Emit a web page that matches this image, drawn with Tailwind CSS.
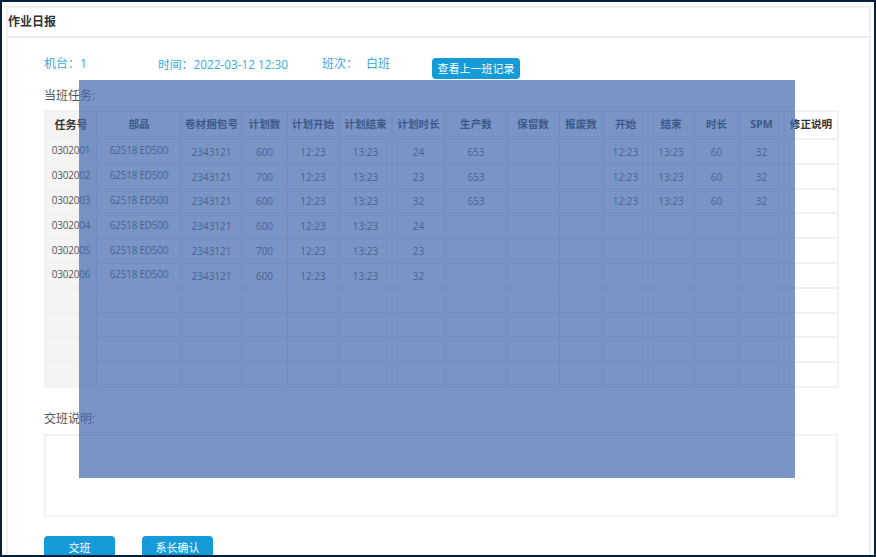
<!DOCTYPE html>
<html lang="zh-CN">
  <head>
    <meta charset="UTF-8" />
    <title>作业日报</title>
    <script src="https://cdn.jsdelivr.net/npm/@tailwindcss/browser@4"></script>
  </head>
  <body class="bg-white">
    <div class="relative w-[876px] h-[557px] overflow-hidden bg-white border-2 border-[#03213a] font-['Open_Sans','Noto_Sans_CJK_SC',sans-serif] text-[#555]">
      <div class="h-[555px] ml-[4px] mt-[4px] mr-[3px] border-l-2 border-r-2 border-t-2 border-[#f0f0f0]">
        <!-- HEADER -->
        <div class="h-[30px] border-b-2 border-[#ebebeb] pt-[5px] text-[12px] leading-[18px] font-bold text-[#333]">作业日报</div>

        <div class="pl-[36px]">
          <!-- INFO ROW -->
          <div class="flex h-[39px] pt-[16px] text-[12px] leading-[20px] text-[#36a9e0]">
            <span class="w-[114px]">机台：1</span>
            <span class="w-[164px] text-[11.8px]">时间：2022-03-12 12:30</span>
            <span class="w-[44px]">班次：</span>
            <span class="w-[66px]">白班</span>
            <button class="h-[21px] w-[88px] mt-[4px] rounded-[4px] bg-[#159bd7] text-white text-[11px] leading-[21px]">查看上一班记录</button>
          </div>

          <p class="mt-[9px] h-[20px] text-[12px] leading-[20px]">当班任务:</p>

          <!-- TASK TABLE -->
          <table class="mt-[4px] w-[793px] table-fixed border-collapse text-[10px] text-center">
            <colgroup>
              <col class="w-[52px]" /><col class="w-[84px]" /><col class="w-[61px]" /><col class="w-[45px]" /><col class="w-[52px]" /><col class="w-[53px]" /><col class="w-[53px]" /><col class="w-[62px]" /><col class="w-[52px]" /><col class="w-[44px]" /><col class="w-[45px]" /><col class="w-[46px]" /><col class="w-[45px]" /><col class="w-[45px]" /><col class="w-[54px]" />
            </colgroup>
            <thead>
              <tr class="h-[28px] text-[10.6px] font-bold text-[#333] [&>th]:border-2 [&>th]:border-[#f1f1f1] [&>th]:p-0 [&>th]:whitespace-nowrap">
                <th class="bg-[#f4f4f4] text-[11px]">任务号</th><th>部品</th><th>卷材捆包号</th><th>计划数</th><th>计划开始</th><th>计划结束</th><th>计划时长</th><th>生产数</th><th>保留数</th><th>报废数</th><th>开始</th><th>结束</th><th>时长</th><th>SPM</th><th>修正说明</th>
              </tr>
            </thead>
            <tbody class="[&_td]:border-2 [&_td]:border-[#f1f1f1] [&_td]:p-0 [&_td]:pt-[2px] [&_tr]:h-[24.8px] [&_td:first-child]:bg-[#f4f4f4] [&_td:nth-child(-n+2)]:pt-0 [&_td:nth-child(-n+2)]:pb-[1px] [&_td:nth-child(-n+2)]:tracking-[-0.25px]">
              <tr><td>0302001</td><td>62518 ED500</td><td>2343121</td><td>600</td><td>12:23</td><td>13:23</td><td>24</td><td>653</td><td></td><td></td><td>12:23</td><td>13:23</td><td>60</td><td>32</td><td></td></tr>
              <tr><td>0302002</td><td>62518 ED500</td><td>2343121</td><td>700</td><td>12:23</td><td>13:23</td><td>23</td><td>653</td><td></td><td></td><td>12:23</td><td>13:23</td><td>60</td><td>32</td><td></td></tr>
              <tr><td>0302003</td><td>62518 ED500</td><td>2343121</td><td>600</td><td>12:23</td><td>13:23</td><td>32</td><td>653</td><td></td><td></td><td>12:23</td><td>13:23</td><td>60</td><td>32</td><td></td></tr>
              <tr><td>0302004</td><td>62518 ED500</td><td>2343121</td><td>600</td><td>12:23</td><td>13:23</td><td>24</td><td></td><td></td><td></td><td></td><td></td><td></td><td></td><td></td></tr>
              <tr><td>0302005</td><td>62518 ED500</td><td>2343121</td><td>700</td><td>12:23</td><td>13:23</td><td>23</td><td></td><td></td><td></td><td></td><td></td><td></td><td></td><td></td></tr>
              <tr><td>0302006</td><td>62518 ED500</td><td>2343121</td><td>600</td><td>12:23</td><td>13:23</td><td>32</td><td></td><td></td><td></td><td></td><td></td><td></td><td></td><td></td></tr>
              <tr><td></td><td></td><td></td><td></td><td></td><td></td><td></td><td></td><td></td><td></td><td></td><td></td><td></td><td></td><td></td></tr>
              <tr><td></td><td></td><td></td><td></td><td></td><td></td><td></td><td></td><td></td><td></td><td></td><td></td><td></td><td></td><td></td></tr>
              <tr><td></td><td></td><td></td><td></td><td></td><td></td><td></td><td></td><td></td><td></td><td></td><td></td><td></td><td></td><td></td></tr>
              <tr><td></td><td></td><td></td><td></td><td></td><td></td><td></td><td></td><td></td><td></td><td></td><td></td><td></td><td></td><td></td></tr>
            </tbody>
          </table>

          <p class="mt-[21px] h-[20px] text-[12px] leading-[20px]">交班说明:</p>
          <div class="mt-[5px] w-[794px] h-[83px] border-2 border-[#f2f2f2]"></div>

          <!-- ACTIONS -->
          <div class="flex gap-[27px] mt-[19px]">
            <button class="w-[71px] h-[30px] rounded-[4px] bg-[#159bd7] text-white text-[11px] leading-[24px] pb-[6px]">交班</button>
            <button class="w-[71px] h-[30px] rounded-[4px] bg-[#159bd7] text-white text-[11px] leading-[24px] pb-[6px]">系长确认</button>
          </div>
        </div>
      </div>

      <!-- translucent block lying over the page -->
      <div class="absolute left-[77px] top-[78px] w-[716px] h-[398px] bg-[#4268ac]/70"></div>
    </div>
  </body>
</html>
